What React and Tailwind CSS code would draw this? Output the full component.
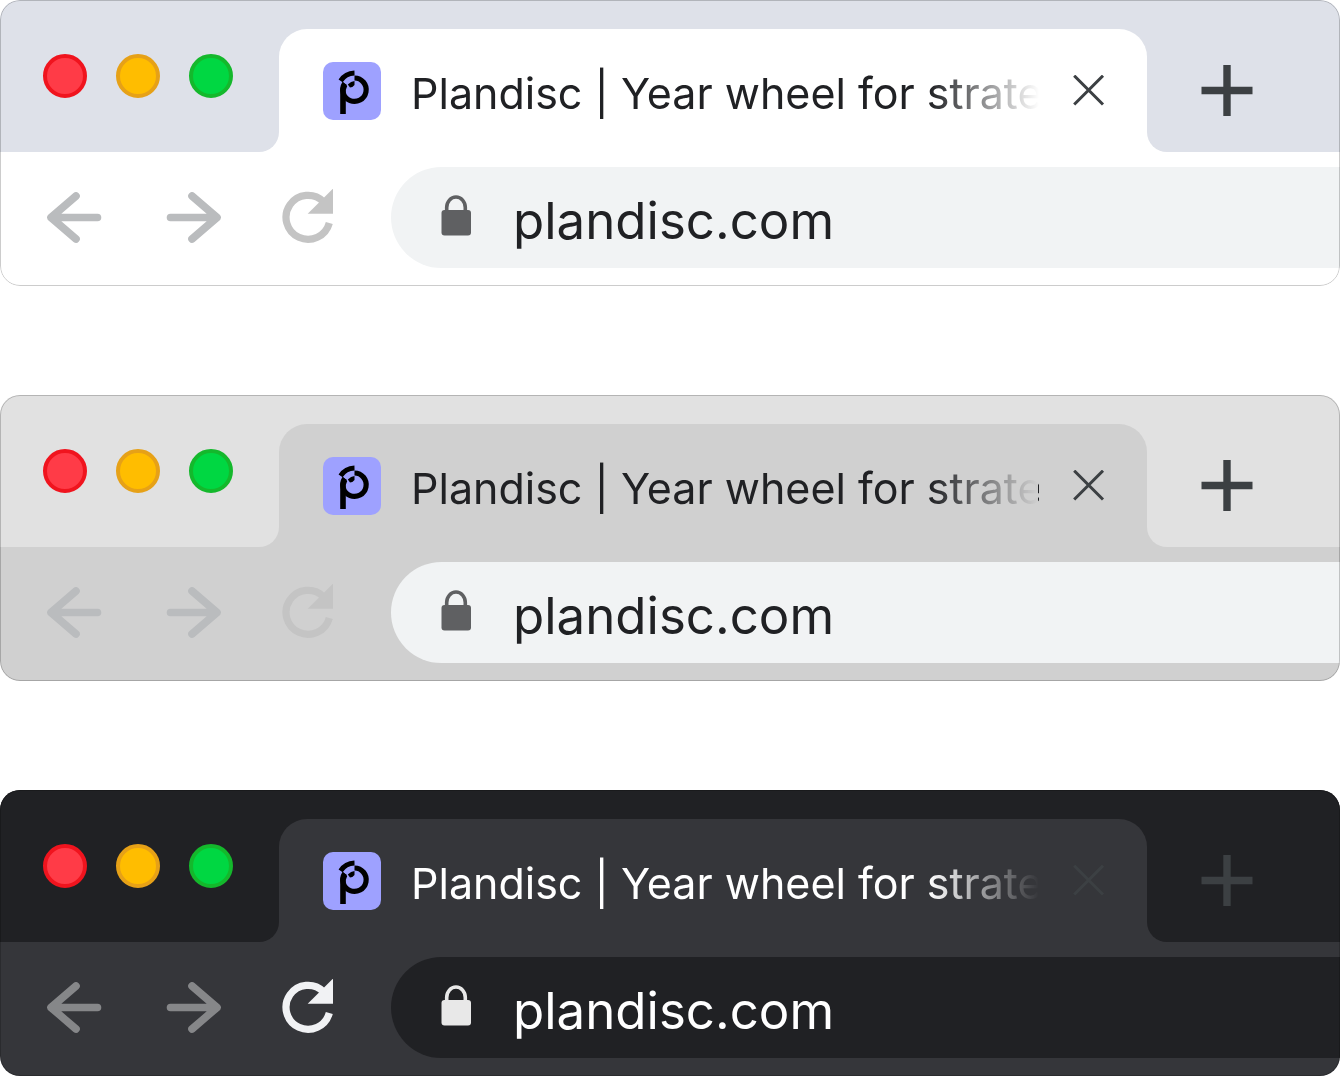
import { clsx } from 'clsx'

const FADE = '[mask-image:linear-gradient(to_right,#000_calc(100%-110px),transparent)]'
// leaves the last pixel column opaque
const FADE_WITH_EDGE =
  '[mask-image:linear-gradient(to_right,#000_calc(100%-110px),transparent_calc(100%-1px),#000_calc(100%-1px))]'

const THEMES = [
  {
    id: 'light',
    strip: 'bg-[#dee1e9]',
    surface: 'bg-white',
    field: 'bg-[#f1f3f4]',
    text: 'text-[#202124]',
    fade: FADE,
    action: 'text-[#3c4043]',
    arrow: 'text-[#babcbe]',
    reload: 'text-[#c4c4c4]',
    lock: 'text-[#5f6062]',
  },
  {
    id: 'gray',
    strip: 'bg-[#e1e1e1]',
    surface: 'bg-[#d0d0d0]',
    field: 'bg-[#f1f3f4]',
    text: 'text-[#202124]',
    fade: FADE_WITH_EDGE,
    action: 'text-[#3c4043]',
    arrow: 'text-[#babcbe]',
    reload: 'text-[#c4c4c4]',
    lock: 'text-[#5f6062]',
  },
  {
    id: 'dark',
    strip: 'bg-[#202124]',
    surface: 'bg-[#35363a]',
    field: 'bg-[#202124]',
    text: 'text-white',
    fade: FADE,
    action: 'text-[#3c4043]',
    arrow: 'text-[#868789]',
    reload: 'text-[#f1f2f4]',
    lock: 'text-[#e8e8e8]',
  },
]

const LIGHTS = [
  { label: 'Close window', color: 'bg-[#ff3b47] border-[#f0141e]' },
  { label: 'Minimize window', color: 'bg-[#ffbd00] border-[#e6a117]' },
  { label: 'Zoom window', color: 'bg-[#00d742] border-[#14b82c]' },
]

function Favicon() {
  return (
    <svg width="58" height="58" viewBox="0 0 58 58" className="shrink-0" aria-hidden="true">
      <rect width="58" height="58" rx="10" fill="#9ea1ff" />
      <path d="M17.2 52V27.5L19.8 19.8L24.2 24L22.8 28V52z" />
      <g fill="none" stroke="#000">
        <path d="M31.5 16A11.7 11.7 0 1 1 21.6 21.4" strokeWidth="5.2" />
        <path d="M31.5 11A17 17 0 0 0 17.6 18.9" strokeWidth="4.8" />
        <path d="M31.5 19V23Q29.5 25.5 27 25.6L24.8 22.6Q28 19.2 31.5 19z" fill="#000" stroke="none" />
      </g>
    </svg>
  )
}

function ArrowIcon({ flipped }) {
  return (
    <svg width="55" height="52" viewBox="0 0 55 52" className={clsx(flipped && '-scale-x-100')} aria-hidden="true">
      <path
        d="M50.5 25.5H4M29 4L4 25.5L29 47"
        fill="none"
        stroke="currentColor"
        strokeWidth="7.6"
        strokeLinecap="round"
        strokeLinejoin="round"
      />
    </svg>
  )
}

function ReloadIcon() {
  return (
    <svg width="52" height="58" viewBox="0 1 52 58" aria-hidden="true">
      <path d="M47.3 35A22 22 0 1 1 41.5 13.7" fill="none" stroke="currentColor" strokeWidth="7.2" />
      <path d="M51 0.6V25.8H25.7z" fill="currentColor" />
    </svg>
  )
}

function LockIcon({ className }) {
  return (
    <svg width="30" height="46" viewBox="0 0 30 46" className={clsx('shrink-0', className)} aria-hidden="true">
      <path d="M5.7 17V12.5A9.3 10.5 0 0 1 24.3 12.5V17" fill="none" stroke="currentColor" strokeWidth="3.6" />
      <rect x="0.5" y="15" width="29.5" height="25.5" rx="3" fill="currentColor" />
    </svg>
  )
}

function CloseIcon() {
  return (
    <svg width="32" height="32" viewBox="0 0 32 32" aria-hidden="true">
      <path d="M1.2 0.7L30 29.5M30 0.7L1.2 29.5" stroke="currentColor" strokeWidth="3" />
    </svg>
  )
}

function PlusIcon() {
  return (
    <svg width="52" height="52" viewBox="0 0 52 52" aria-hidden="true">
      <path d="M26 0V51M0.5 25.5H51.5" stroke="currentColor" strokeWidth="7.4" />
    </svg>
  )
}

function BrowserWindow({ theme }) {
  return (
    <section
      className={clsx(
        'relative overflow-hidden rounded-[20px] after:pointer-events-none after:absolute after:inset-0 after:rounded-[20px] after:border after:border-black/20',
        theme.surface,
      )}
    >
      <div className="flex h-[152px]">
        {/* the strip is painted in pieces so the tab's lower corners can flare outwards */}
        <div className={clsx('flex w-[279px] shrink-0 items-center gap-[29px] rounded-br-[20px] pl-[43px]', theme.strip)}>
          {LIGHTS.map((light) => (
            <button
              key={light.label}
              aria-label={light.label}
              className={clsx('size-11 rounded-full border-4', light.color)}
            />
          ))}
        </div>

        <div className={clsx('min-w-0 flex-1 pt-[29px]', theme.strip)}>
          <div className={clsx('flex h-full items-center rounded-t-[28px] pr-[42px] pl-11', theme.surface)}>
            <Favicon />
            <span
              className={clsx(
                'ml-[30px] min-w-0 flex-1 overflow-hidden pt-1 text-[43px] leading-[56px] whitespace-nowrap',
                theme.fade,
                theme.text,
              )}
            >
              Plandisc | Year wheel for strate
            </span>
            <button aria-label="Close tab" className={clsx('ml-[34px] shrink-0', theme.action)}>
              <CloseIcon />
            </button>
          </div>
        </div>

        <div className={clsx('flex w-[193px] shrink-0 items-center rounded-bl-[20px] pt-[29px] pl-[54px]', theme.strip)}>
          <button aria-label="New tab" className={theme.action}>
            <PlusIcon />
          </button>
        </div>
      </div>

      <div className="flex items-center pt-[15px] pb-[18px] pl-[47px]">
        <button aria-label="Back" className={clsx('shrink-0', theme.arrow)}>
          <ArrowIcon />
        </button>
        <button aria-label="Forward" className={clsx('ml-16 shrink-0', theme.arrow)}>
          <ArrowIcon flipped />
        </button>
        <button aria-label="Reload" className={clsx('ml-[61px] shrink-0', theme.reload)}>
          <ReloadIcon />
        </button>
        <label
          className={clsx('ml-[57px] flex h-[101px] min-w-0 flex-1 items-center rounded-l-full pl-[50px]', theme.field)}
        >
          <LockIcon className={theme.lock} />
          <input
            type="text"
            aria-label="Address"
            defaultValue="plandisc.com"
            className={clsx('ml-[42px] min-w-0 flex-1 pt-1.5 text-[51px] leading-[64px] outline-none', theme.text)}
          />
        </label>
      </div>
    </section>
  )
}

export default function App() {
  return (
    <main className="flex flex-col gap-[109px] bg-white font-['Inter',sans-serif]">
      {THEMES.map((theme) => (
        <BrowserWindow key={theme.id} theme={theme} />
      ))}
    </main>
  )
}
